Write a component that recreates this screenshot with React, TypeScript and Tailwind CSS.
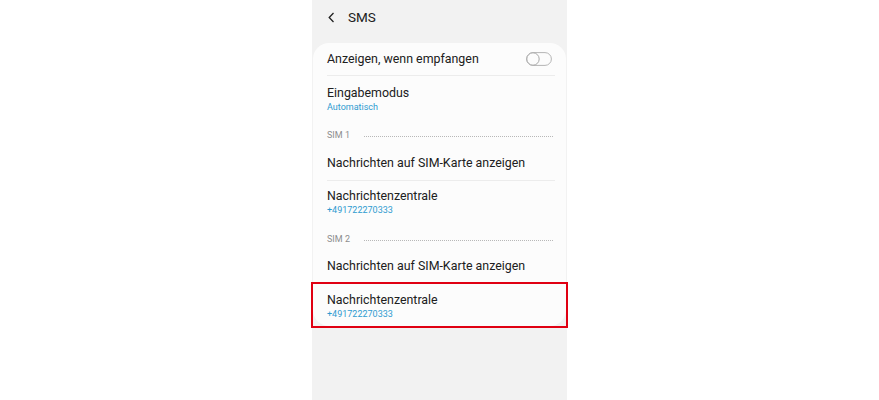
import React from "react";

function Toggle() {
    return (
        <svg width="26" height="14" viewBox="0 0 26 14" fill="none">
            <rect x="0.6" y="0.6" width="24.8" height="12.8" rx="6.4" stroke="#b5b5b5" strokeWidth="1" />
            <circle cx="7" cy="7" r="6.2" stroke="#a8a8a8" strokeWidth="1" fill="#fcfcfc" />
        </svg>
    );
}

function Divider() {
    return <div className="ml-[14px] mr-[11px] h-px bg-[#ececec]" />;
}

function SimHeader({ label }: { label: string }) {
    return (
        <div className="flex h-[22px] items-center pl-[14px] pr-[13px]">
            <span className="text-[9px] text-[#8e8e8e]">{label}</span>
            <div className="ml-[14px] flex-1 border-t border-dotted border-[#b8b8b8]" />
        </div>
    );
}

function TwoLine({ title, sub, h }: { title: string; sub: string; h: string }) {
    return (
        <div className={`flex flex-col px-[14px] ${h}`}>
            <span className="text-[12.4px] leading-[16px] text-[#202020]">{title}</span>
            <span className="text-[9px] leading-[13px] text-[#2f9bd0]">{sub}</span>
        </div>
    );
}

export default function App() {
    return (
        <div className="flex h-[400px] w-full justify-center bg-white font-['Roboto',sans-serif]">
            <div className="relative flex h-[400px] w-[255px] flex-col bg-[#f2f2f2]">
                {/* Header */}
                <div className="flex h-[43px] items-center gap-[13px] pb-[9px] pl-[16px]">
                    <svg width="7" height="11" viewBox="0 0 7 11" fill="none">
                        <path d="M5.5 1 L1.2 5.5 L5.5 10" stroke="#222" strokeWidth="1.3" />
                    </svg>
                    <span className="text-[13.5px] text-[#202020]">SMS</span>
                </div>

                {/* Card */}
                <div className="ml-px w-[253px] rounded-[16px] bg-[#fcfcfc]">
                    <div className="flex h-[32px] items-center justify-between pl-[14px] pr-[14px]">
                        <span className="text-[12.4px] text-[#202020]">Anzeigen, wenn empfangen</span>
                        <Toggle />
                    </div>
                    <Divider />
                    <TwoLine title="Eingabemodus" sub="Automatisch" h="h-[49px] pt-[9px]" />
                    <SimHeader label="SIM 1" />
                    <div className="flex h-[33px] items-center px-[14px]">
                        <span className="text-[12.4px] text-[#202020]">Nachrichten auf SIM-Karte anzeigen</span>
                    </div>
                    <Divider />
                    <TwoLine title="Nachrichtenzentrale" sub="+491722270333" h="h-[48px] pt-[7px]" />
                    <SimHeader label="SIM 2" />
                    <div className="flex h-[30px] items-center px-[14px]">
                        <span className="text-[12.4px] text-[#202020]">Nachrichten auf SIM-Karte anzeigen</span>
                    </div>
                    <TwoLine title="Nachrichtenzentrale" sub="+491722270333" h="h-[45px] pt-[11px]" />
                </div>

                {/* Highlight */}
                <div className="absolute left-[-1px] top-[282px] h-[46px] w-[257px] border-2 border-[#e00012]" />
            </div>
        </div>
    );
}
